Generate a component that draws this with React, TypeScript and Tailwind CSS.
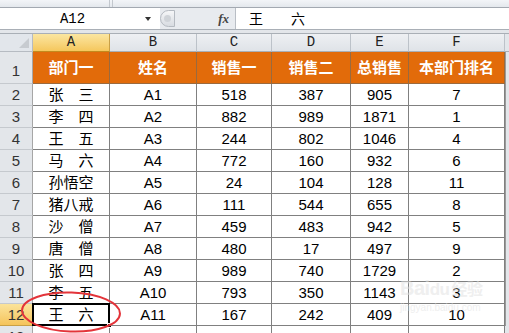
import React from "react";

const widths = ["w-[77px]", "w-[87px]", "w-[75px]", "w-[79px]", "w-[58px]", "w-[96px]"];
const letters = ["A", "B", "C", "D", "E", "F"];
const header = ["部门一", "姓名", "销售一", "销售二", "总销售", "本部门排名"];
const rows: string[][] = [
  ["张　三", "A1", "518", "387", "905", "7"],
  ["李　四", "A2", "882", "989", "1871", "1"],
  ["王　五", "A3", "244", "802", "1046", "4"],
  ["马　六", "A4", "772", "160", "932", "6"],
  ["孙悟空", "A5", "24", "104", "128", "11"],
  ["猪八戒", "A6", "111", "544", "655", "8"],
  ["沙　僧", "A7", "459", "483", "942", "5"],
  ["唐　僧", "A8", "480", "17", "497", "9"],
  ["张　四", "A9", "989", "740", "1729", "2"],
  ["李　五", "A10", "793", "350", "1143", "3"],
  ["王　六", "A11", "167", "242", "409", "10"],
];

const mono = { fontFamily: '"Liberation Mono", monospace' };
const sans = { fontFamily: '"Liberation Sans", "Noto Sans CJK SC", sans-serif' };

export default function App() {
  return (
    <div className="relative w-[509px] h-[333px] overflow-hidden bg-white" style={sans}>
      {/* top toolbar strip */}
      <div className="relative h-[8px] bg-gradient-to-b from-[#f3f5f8] to-[#e4e8ed] border-b border-[#a3a9b1] flex">
        <div className="w-[110px] h-full border-r border-[#c3c8ce]" />
        <div className="w-[3px] h-full border-r border-[#c3c8ce]" />
      </div>
      {/* formula bar */}
      <div className="h-[22px] flex border-b border-[#a9afb6] bg-white">
        <div className="w-[160px] flex items-center relative">
          <div className="w-[145px] text-center text-[14px] text-black leading-none" style={mono}>A12</div>
          <div className="w-0 h-0 border-l-[3px] border-r-[3px] border-t-[4px] border-l-transparent border-r-transparent border-t-[#333]" />
        </div>
        <div className="w-[76px] bg-[#e8ebef] flex items-center border-r border-[#b9bec5] relative">
          <div className="w-[15px] h-[17px] rounded-l-full border border-[#b5bac1] bg-gradient-to-b from-[#f5f6f8] to-[#d8dce1] flex items-center justify-center">
            <div className="w-[7px] h-[7px] rounded-full bg-[#cfd3d8]" />
          </div>
          <div className="ml-auto mr-[6px] italic font-bold text-[13px] text-[#444]" style={{ fontFamily: '"Liberation Serif", serif' }}>
            fx
          </div>
        </div>
        <div className="flex-1 flex items-center pl-[13px] text-[14px] text-black" style={{ fontFamily: '"Noto Sans CJK SC", sans-serif' }}>
          王　　六
        </div>
      </div>
      <div className="h-[4px] bg-[#e3e6ea] border-b border-[#a9afb6]" />
      {/* column headers */}
      <div className="flex h-[18px]">
        <div className="w-[33px] border-r border-b border-[#b6bbc2] bg-[#e2e6eb] relative">
          <svg className="absolute left-[19px] top-[4px]" width="11" height="11">
            <polygon points="10,0 10,10 0,10" fill="#c7cbd0" />
          </svg>
        </div>
        {letters.map((l, i) => (
          <div
            key={l}
            className={`${widths[i]} flex items-center justify-center text-[14px] text-[#222] border-r border-b ${
              i === 0
                ? "bg-gradient-to-b from-[#fbe6a0] to-[#f5c75c] border-r-[#c9a046] border-b-[#c28a1e]"
                : "bg-gradient-to-b from-[#eef0f3] to-[#dfe3e8] border-r-[#bcc2c9] border-b-[#a9afb6]"
            }`}
            style={mono}
          >
            {l}
          </div>
        ))}
        <div className="flex-1 bg-[#e3e6ea] border-b border-[#a9afb6]" />
      </div>
      {/* row 1 */}
      <div className="flex h-[32px]">
        <div className="w-[33px] bg-[#e3e6ea] border-r border-[#a6a6a6] border-b border-b-[#c5c9ce] flex items-end justify-center pb-[1px] text-[15px] text-[#333]">
          1
        </div>
        {header.map((h, i) => (
          <div
            key={h}
            className={`${widths[i]} bg-[#e26b0a] border-r border-b border-[#9a6a3e] flex items-center justify-center text-white font-bold text-[15px]`}
            style={{ fontFamily: '"Noto Sans CJK SC", sans-serif' }}
          >
            {h}
          </div>
        ))}
        <div className="flex-1 bg-[#e3e6ea] border-l border-[#9a9a9a]" />
      </div>
      {rows.map((r, ri) => {
        const sel = ri === rows.length - 1;
        return (
          <div key={ri} className="flex h-[22px]">
            <div
              className={`w-[33px] border-r border-b flex items-end justify-center pb-[1px] text-[15px] text-[#333] leading-[18px] ${
                sel ? "bg-gradient-to-b from-[#fbe39a] to-[#f5c45a] border-r-[#c28a1e] border-b-[#c9a046]" : "bg-[#e3e6ea] border-r-[#a6a6a6] border-b-[#c5c9ce]"
              }`}
            >
              {ri + 2}
            </div>
            {r.map((c, ci) => (
              <div
                key={ci}
                className={`${widths[ci]} relative border-r border-b border-[#808080] flex items-center justify-center text-[15px] text-black leading-none`}
              >
                {c}
                {sel && ci === 0 && (
                  <>
                    <div className="absolute left-[-1px] top-[-1px] right-[-1px] bottom-[-1px] border-2 border-black" />
                    <div className="absolute right-[-3px] bottom-[-3px] w-[5px] h-[5px] bg-black border border-white" />
                  </>
                )}
              </div>
            ))}
            <div className="flex-1 bg-[#e3e6ea] border-l border-[#9a9a9a]" />
          </div>
        );
      })}
      {/* row 13 partial */}
      <div className="flex h-[10px]">
        <div className="w-[33px] bg-[#e3e6ea] border-r border-[#a6a6a6] flex justify-center pt-[3px] text-[15px] text-[#333] leading-none">
          13
        </div>
        {widths.map((w, i) => (
          <div key={i} className={`${w} border-r border-[#808080]`} />
        ))}
        <div className="flex-1 bg-[#e3e6ea]" />
      </div>

      {/* watermark */}
      <div className="absolute left-[400px] top-[278px] flex flex-col items-start pointer-events-none select-none">
        <div className="text-[20px] font-bold text-[#e0e0e0] opacity-50 leading-none tracking-tight">
          Bai<span className="text-[17px]">du</span>
          <span className="text-[16px] ml-[2px]" style={{ fontFamily: '"Noto Sans CJK SC", sans-serif' }}>经验</span>
        </div>
        <div className="text-[10px] text-[#e0e0e0] opacity-50 leading-none mt-[5px]">jingyan.baidu.com</div>
      </div>

      {/* red ellipse */}
      <svg className="absolute left-0 top-0 pointer-events-none" width="509" height="333">
        <ellipse cx="71" cy="312" rx="49" ry="19.5" fill="none" stroke="#e3343a" strokeWidth="2" transform="rotate(2 71 312)" />
      </svg>
    </div>
  );
}
